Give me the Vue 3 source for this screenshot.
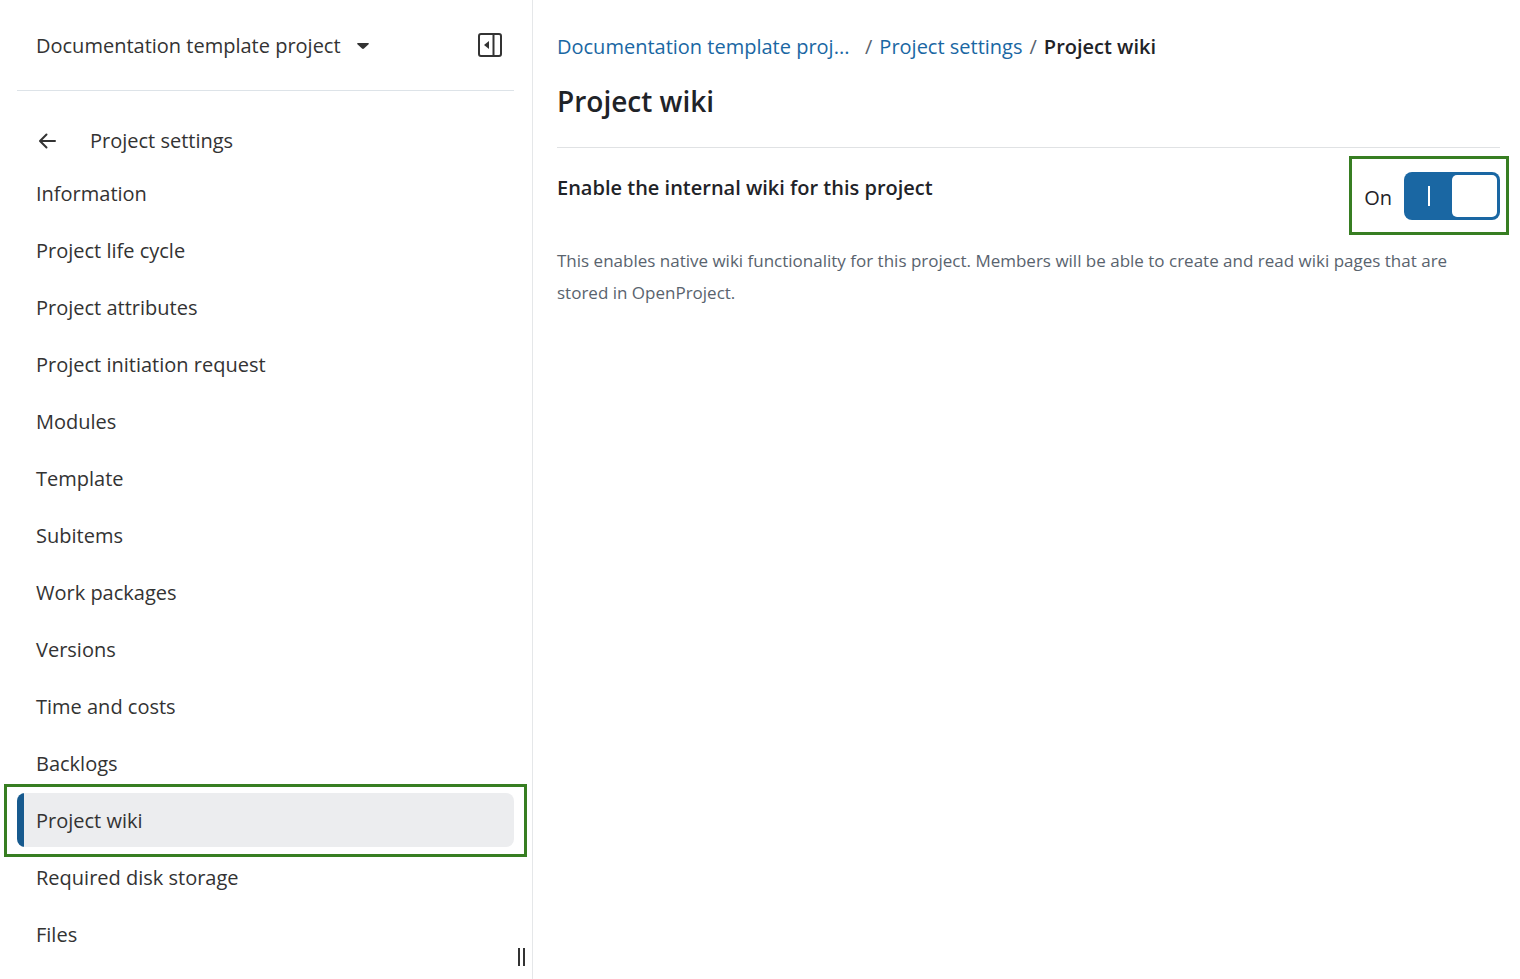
<template>
  <div class="layout">
    <aside class="sidebar">
      <div class="sidebar-header">
        <button type="button" class="project-select">
          <span>Documentation template project</span>
          <svg class="caret" width="12" height="6" viewBox="0 0 12 6">
            <path d="M1 0h10c.9 0 1.200.8.6 1.300L7 5.600c-.6.500-1.400.500-2 0L.4 1.300C-.2.800.1 0 1 0z" />
          </svg>
        </button>
        <button type="button" class="icon-button" aria-label="Collapse menu">
          <svg width="24" height="24" viewBox="0 0 24 24">
            <rect x="1" y="1" width="22" height="22" rx="2" class="stroke" />
            <path d="M15.500 1v22" class="stroke" />
            <path d="M11 8v8l-5-4z" />
          </svg>
        </button>
      </div>

      <nav class="menu" aria-label="Project settings">
        <div class="menu-back">
          <button type="button" class="icon-button" aria-label="Back">
            <svg width="22" height="22" viewBox="0 0 22 22">
              <path d="M19 11H4.500M10.500 4.500L4 11l6.500 6.500" class="stroke arrow" />
            </svg>
          </button>
          <span>Project settings</span>
        </div>
        <ul class="menu-list">
          <li v-for="item in items" :key="item">
            <a
              href="#"
              :class="['menu-item', item === active ? 'selected' : '']"
              :aria-current="item === active ? 'page' : undefined"
              @click.prevent
              >{{ item }}</a
            >
          </li>
        </ul>
      </nav>

      <div class="resizer"></div>
    </aside>

    <main class="content">
      <nav class="breadcrumb" aria-label="Breadcrumb">
        <a href="#" class="project-link" @click.prevent>Documentation template proj...</a>
        <span class="separator">/</span>
        <a href="#" @click.prevent>Project settings</a>
        <span class="separator">/</span>
        <span class="current">Project wiki</span>
      </nav>
      <h1>Project wiki</h1>

      <section class="setting">
        <h2 id="wiki-label">Enable the internal wiki for this project</h2>
        <div class="toggle">
          <span class="toggle-status">{{ enabled ? "On" : "Off" }}</span>
          <button
            type="button"
            role="switch"
            aria-labelledby="wiki-label"
            :aria-checked="enabled"
            :class="['switch', enabled ? 'checked' : '']"
            @click="enabled = !enabled"
          >
            <span class="switch-line"></span>
            <span class="switch-knob"></span>
          </button>
        </div>
      </section>
      <p class="description">
        This enables native wiki functionality for this project. Members will be
        able to create and read wiki pages that are stored in OpenProject.
      </p>
    </main>
  </div>
</template>

<script setup>
import { ref } from "vue";

const items = [
  "Information",
  "Project life cycle",
  "Project attributes",
  "Project initiation request",
  "Modules",
  "Template",
  "Subitems",
  "Work packages",
  "Versions",
  "Time and costs",
  "Backlogs",
  "Project wiki",
  "Required disk storage",
  "Files",
];
const active = "Project wiki";
const enabled = ref(true);
</script>

<style>
body {
  background: #fff;
}
</style>

<style scoped>
.layout {
  display: flex;
  min-height: 100vh;
  font-family: "Segoe UI", "Open Sans", "Noto Sans", sans-serif;
  font-size: 20px;
  line-height: 32px;
  color: #333;
}
button {
  padding: 0;
  border: 0;
  background: none;
  font: inherit;
  color: inherit;
  cursor: pointer;
}
a {
  text-decoration: none;
}
svg {
  display: block;
  fill: #333;
}
.stroke {
  fill: none;
  stroke: #333;
  stroke-width: 2;
}
.arrow {
  stroke-linecap: round;
  stroke-linejoin: round;
}

.sidebar {
  position: relative;
  flex: 0 0 35%;
  border-right: 1px solid #e5e7e9;
}
.sidebar-header {
  display: flex;
  align-items: center;
  justify-content: space-between;
  height: 91px;
  margin: 0 18px 0 17px;
  padding: 0 12px 0 19px;
  box-sizing: border-box;
  border-bottom: 1px solid #dde3e8;
}
.project-select {
  display: flex;
  align-items: center;
  gap: 16px;
  padding-top: 2px;
  white-space: nowrap;
}

.menu {
  padding: 24px 18px 16px 17px;
}
.menu-back {
  display: flex;
  align-items: center;
  gap: 32px;
  height: 51px;
  padding-left: 19px;
}
.menu-list {
  display: flex;
  flex-direction: column;
  gap: 3px;
  margin: 0;
  padding: 0;
  list-style: none;
}
.menu-item {
  position: relative;
  display: block;
  padding: 12px 19px 10px;
  border-radius: 8px;
  color: #333;
}
.selected {
  background: linear-gradient(to right, #175a8e 7px, #ecedef 7px);
}
.selected::after {
  content: "";
  position: absolute;
  inset: -9px -13px -10px;
  border: 3px solid #377e22;
  pointer-events: none;
}
.resizer {
  position: absolute;
  right: 7px;
  bottom: 13px;
  width: 3px;
  height: 18px;
  border: solid #333;
  border-width: 0 2px;
  cursor: col-resize;
}

.content {
  flex: 1;
  min-width: 0;
  padding: 31px 20px 30px 24px;
  color: #1f2328;
}
.breadcrumb {
  display: flex;
  gap: 7px;
  white-space: nowrap;
}
.breadcrumb a {
  color: #1a67a3;
}
.project-link {
  min-width: 301px;
}
.separator {
  color: #59636e;
}
.current {
  font-weight: 600;
}
h1 {
  margin: 0;
  padding: 14px 0 22px;
  border-bottom: 1px solid #e0e2e4;
  font-size: 28px;
  line-height: 48px;
  font-weight: 600;
}
.setting {
  display: flex;
  align-items: flex-start;
  justify-content: space-between;
  padding-top: 24px;
}
h2 {
  margin: 0;
  font-size: 20px;
  font-weight: 600;
}
.toggle {
  position: relative;
  display: flex;
  align-items: center;
  gap: 12px;
}
.toggle::after {
  content: "";
  position: absolute;
  inset: -16px -9px -15px -15px;
  border: 3px solid #377e22;
  pointer-events: none;
}
.toggle-status {
  padding-top: 3px;
}
.switch {
  display: flex;
  align-items: center;
  width: 96px;
  height: 48px;
  padding: 3px 2px;
  box-sizing: border-box;
  border-radius: 8px;
  background: #818b98;
}
.switch.checked {
  background: #1a67a3;
}
.switch-line {
  width: 2px;
  height: 20px;
  margin: 0 22px;
  background: #fff;
}
.switch-knob {
  width: 45px;
  height: 42px;
  border-radius: 5px;
  background: #fff;
}
.switch:not(.checked) .switch-knob {
  order: -1;
}
.description {
  margin: 0;
  padding-top: 25px;
  font-size: 17px;
  color: #59636e;
}
</style>
